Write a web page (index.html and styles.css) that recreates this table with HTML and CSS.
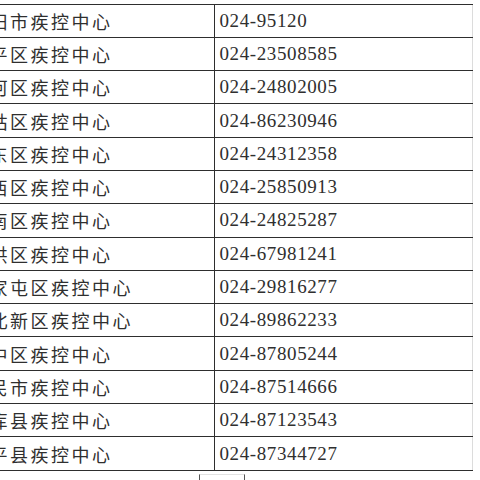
FILE: index.html
```html
<!DOCTYPE html>
<html lang="zh">
<head>
<meta charset="utf-8">
<link rel="stylesheet" href="styles.css">
</head>
<body>
<div class="page">
<table class="list">
<colgroup><col class="c-name"><col class="c-tel"></colgroup>
<tr><td class="name">沈阳市疾控中心</td><td class="tel">024-95120</td></tr>
<tr><td class="name">和平区疾控中心</td><td class="tel">024-23508585</td></tr>
<tr><td class="name">沈河区疾控中心</td><td class="tel">024-24802005</td></tr>
<tr><td class="name">皇姑区疾控中心</td><td class="tel">024-86230946</td></tr>
<tr><td class="name">大东区疾控中心</td><td class="tel">024-24312358</td></tr>
<tr><td class="name">铁西区疾控中心</td><td class="tel">024-25850913</td></tr>
<tr><td class="name">浑南区疾控中心</td><td class="tel">024-24825287</td></tr>
<tr><td class="name">于洪区疾控中心</td><td class="tel">024-67981241</td></tr>
<tr><td class="name">苏家屯区疾控中心</td><td class="tel">024-29816277</td></tr>
<tr><td class="name">沈北新区疾控中心</td><td class="tel">024-89862233</td></tr>
<tr><td class="name">辽中区疾控中心</td><td class="tel">024-87805244</td></tr>
<tr><td class="name">新民市疾控中心</td><td class="tel">024-87514666</td></tr>
<tr><td class="name">法库县疾控中心</td><td class="tel">024-87123543</td></tr>
<tr><td class="name">康平县疾控中心</td><td class="tel">024-87344727</td></tr>
</table>
<div class="foot"></div>
</div>
</body>
</html>
```
FILE: styles.css
```css
html, body {
  margin: 0;
  padding: 0;
  background: #ffffff;
}
body {
  width: 480px;
  height: 480px;
  overflow: hidden;
}
.page {
  padding-top: 3.5px;
}
.list {
  border-collapse: collapse;
  table-layout: fixed;
  width: 508px;
  margin-left: -36px;
  border-right: 1px solid #dcdcdc;
}
.c-name { width: 250px; }
.c-tel { width: 258px; }
.list tr {
  height: 33.3px;
}
.list td {
  border-top: 1px solid #2e2e2e;
  border-bottom: 1px solid #2e2e2e;
  padding: 0 0 0 5px;
  vertical-align: middle;
  color: #2f2f2f;
  white-space: nowrap;
  overflow: hidden;
}
.name {
  font-family: "Noto Sans CJK SC", sans-serif;
  font-size: 18px;
  letter-spacing: 2.5px;
  border-right: 1px solid #2e2e2e;
}
.tel {
  font-family: "Liberation Serif", serif;
  font-size: 19px;
  letter-spacing: 0.6px;
}
.foot {
  margin: 3px 0 0 199px;
  width: 44px;
  height: 8px;
  border-left: 1px solid #555;
  border-right: 1px solid #555;
  border-top: 1px solid #e2e2e2;
}
```
